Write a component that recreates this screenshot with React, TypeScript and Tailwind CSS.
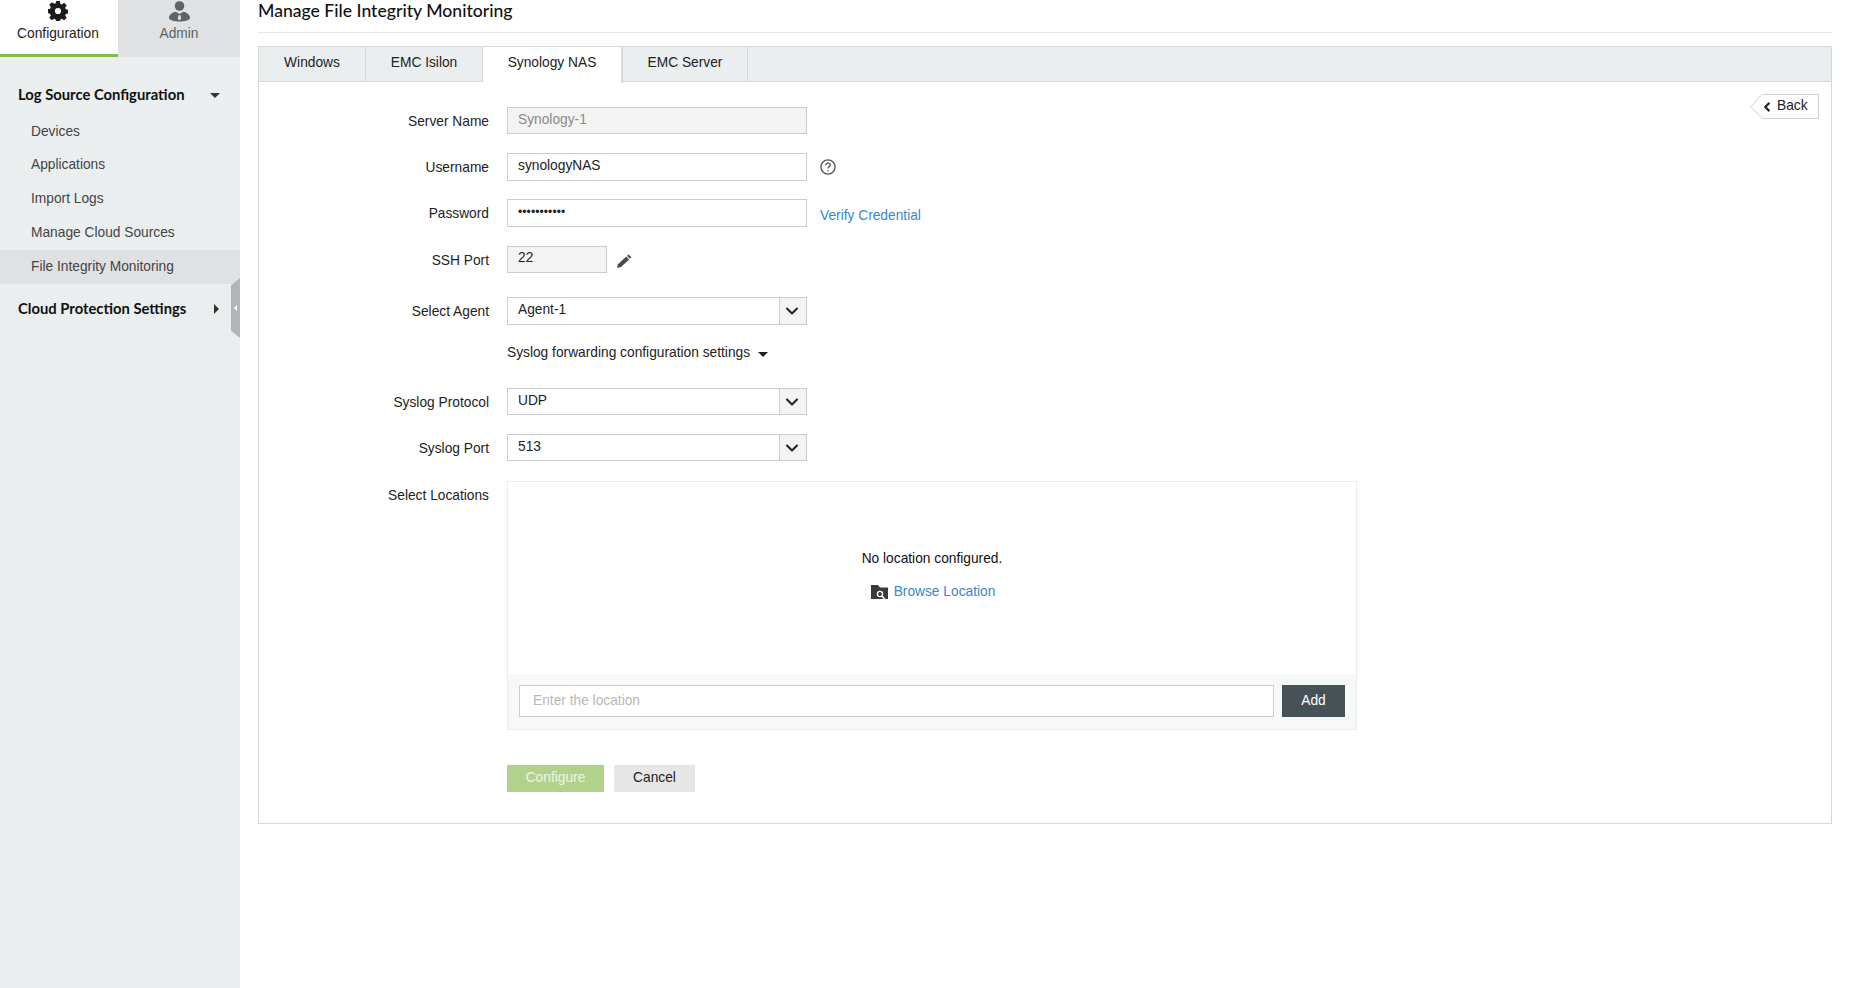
import { ChevronDown, ChevronLeft } from "lucide-react";

const menuItems = ["Devices", "Applications", "Import Logs", "Manage Cloud Sources", "File Integrity Monitoring"];
const tabs = [
  { label: "Windows", width: "w-[107px]" },
  { label: "EMC Isilon", width: "w-[117px]" },
  { label: "Synology NAS", width: "w-[140px]", active: true },
  { label: "EMC Server", width: "w-[125px]" },
];

function GearIcon() {
  return (
    <svg viewBox="0 0 24 24" className="w-[20px] h-[20px] mt-[1px]" fill="#1c1c1c">
      <path
        fillRule="evenodd"
        d="M9.800 0h4.400l.6 3.300 1.800.8 2.800-1.900 3.100 3.100-1.900 2.800.8 1.800 3.300.6v4.400l-3.300.6-.8 1.800 1.900 2.800-3.100 3.100-2.800-1.900-1.800.8-.6 3.300H9.800l-.6-3.300-1.800-.8-2.800 1.900-3.100-3.100 1.900-2.800-.8-1.800L-.7 14.200V9.800l3.300-.6.8-1.800-1.900-2.800 3.100-3.100 2.800 1.900 1.800-.8zM12 8.300a3.700 3.700 0 1 0 0 7.400 3.700 3.700 0 0 0 0-7.400z"
      />
    </svg>
  );
}

function AdminIcon() {
  return (
    <svg viewBox="0 0 21 21" className="w-[21px] h-[21px] mt-[1px]" fill="#5c6468">
      <circle cx="10.500" cy="5" r="4.800" />
      <path d="M0 17c0-3.500 3-5.500 6.800-6.300L10.500 13l3.700-2.300C18 11.500 21 13.500 21 17c0 2-5 3.500-10.500 3.500S0 19 0 17z" />
      <path d="M9.500 14.200h2l.6 3.800-1.600 1.300L8.900 18z" fill="#e0e1e2" />
    </svg>
  );
}

function FolderSearchIcon() {
  return (
    <svg viewBox="0 0 17 15" className="w-[17px] h-[15px]">
      <path d="M0 0h7l2 2.500h8V14H0z" fill="#3a3a3c" />
      <circle cx="9" cy="9" r="2.600" fill="none" stroke="#fff" strokeWidth="1.300" />
      <path d="M11 11l3 3.500" stroke="#fff" strokeWidth="1.500" />
    </svg>
  );
}

function Field({ label, className, children }: { label: string; className: string; children: React.ReactNode }) {
  return (
    <div className={`flex items-center ${className}`}>
      <div className="w-[230px] text-right pt-[3px]">{label}</div>
      <div className="ml-[18px] flex items-center">{children}</div>
    </div>
  );
}

function TextBox({ value, className }: { value: string; className: string }) {
  return <div className={`border border-[#cccccc] pl-[10px] flex items-center ${className}`}>{value}</div>;
}

function SelectBox({ value, height }: { value: string; height: string }) {
  return (
    <div className={`w-[300px] border border-[#cccccc] flex ${height}`}>
      <div className="flex-1 pl-[10px] pb-[1px] flex items-center">{value}</div>
      <div className="w-[27px] bg-[#f3f3f3] border-l border-[#cccccc] pr-[2px] flex items-center justify-center">
        <ChevronDown size={20} strokeWidth={2.500} color="#222" />
      </div>
    </div>
  );
}

export default function App() {
  return (
    <div className="flex min-h-screen bg-white text-[13.75px] text-[#222222] font-['Liberation_Sans',sans-serif]">
      {/* Sidebar */}
      <aside className="relative w-[240px] shrink-0 bg-[#eaeeef]">
        <div className="flex h-[57px]">
          <div className="w-[118px] bg-white border-b-[3px] border-[#84b84c] pr-[2px] flex flex-col items-center">
            <GearIcon />
            <span className="mt-[3px]">Configuration</span>
          </div>
          <div className="flex-1 bg-[#e0e1e2] text-[#5c6468] flex flex-col items-center">
            <AdminIcon />
            <span className="mt-[2px]">Admin</span>
          </div>
        </div>

        <div className="mt-[27px] pl-[18px] pr-[20px] h-[20px] flex items-center justify-between font-['Lato',sans-serif] font-bold text-[14.800px] text-[#111]">
          <span>Log Source Configuration</span>
          <span className="mt-[2px] w-0 h-0 border-x-[5px] border-t-[5px] border-x-transparent border-t-[#333]" />
        </div>
        <ul className="mt-[11px]">
          {menuItems.map((item) => (
            <li
              key={item}
              className={`h-[33.750px] pl-[31px] flex items-center text-[#444] ${item === "File Integrity Monitoring" ? "bg-[#e0e1e2]" : ""}`}
            >
              {item}
            </li>
          ))}
        </ul>
        <div className="mt-[14px] pl-[18px] pr-[21px] h-[20px] flex items-center justify-between font-['Lato',sans-serif] font-bold text-[14.800px] text-[#111]">
          <span>Cloud Protection Settings</span>
          <span className="mt-[3px] w-0 h-0 border-y-[5px] border-l-[5px] border-y-transparent border-l-[#333]" />
        </div>

        {/* collapse handle */}
        <div className="absolute right-0 top-[278px] w-[9px] h-[60px] bg-[#b0b6ba] [clip-path:polygon(100%_0,100%_100%,0_88%,0_12%)] flex items-center justify-center">
          <span className="w-0 h-0 border-y-[3px] border-r-[3px] border-y-transparent border-r-white" />
        </div>
      </aside>

      {/* Content */}
      <main className="flex-1 pl-[18px] pr-[19px]">
        <h1 className="h-[33px] border-b border-[#e4e6e7] font-['Lato',sans-serif] font-medium text-[17.600px] leading-[22px] text-[#111]">
          Manage File Integrity Monitoring
        </h1>

        <div className="relative mt-[13px] border border-[#d6d9da] h-[778px]">
          <div className="flex h-[35px] bg-[#eaeeef] border-b border-[#d6d9da]">
            {tabs.map((tab) => (
              <div
                key={tab.label}
                className={`${tab.width} flex items-center justify-center border-r border-[#d6d9da] ${tab.active ? "bg-white h-[36px] border-r-2 pb-[3px]" : "h-[34px] pb-[1px]"}`}
              >
                {tab.label}
              </div>
            ))}
          </div>

          {/* Back */}
          <div className="absolute right-[12px] top-[47px] h-[25px] w-[69px] flex items-center">
            <svg viewBox="0 0 69 25" className="absolute inset-0 w-[69px] h-[25px]" fill="none" stroke="#d0d0d0">
              <path d="M12 .5H68.500V24.500H12L.8 12.500z" fill="#fff" />
            </svg>
            <ChevronLeft size={14} strokeWidth={4} color="#222" className="relative ml-[10px]" />
            <span className="relative ml-[3px]">Back</span>
          </div>

          <div className="flex flex-col">
            <Field label="Server Name" className="mt-[25px]">
              <TextBox value="Synology-1" className="w-[300px] h-[27px] pb-[1px] bg-[#f3f3f3] text-[#8a8a8a]" />
            </Field>
            <Field label="Username" className="mt-[19px]">
              <TextBox value="synologyNAS" className="w-[300px] h-[28px] pb-[1px]" />
              <svg viewBox="0 0 18 18" className="ml-[13px] w-[16px] h-[16px]" fill="none" stroke="#555" strokeWidth="1.500">
                <circle cx="9" cy="9" r="8" />
                <path d="M6.500 7c0-1.500 1.200-2.300 2.500-2.300s2.500.9 2.500 2.200c0 1.800-2.500 1.900-2.500 3.800" />
                <path d="M9 12.300v1.500" />
              </svg>
            </Field>
            <Field label="Password" className="mt-[18px]">
              <TextBox value="•••••••••••" className="w-[300px] h-[28px] pb-[3px] text-[12px] tracking-[0.1px]" />
              <a className="ml-[13px] text-[#3a86c8] pt-[6px]">Verify Credential</a>
            </Field>
            <Field label="SSH Port" className="mt-[19px]">
              <TextBox value="22" className="w-[100px] h-[27px] pb-[2px] bg-[#f3f3f3]" />
              <svg viewBox="0 0 15 14" className="ml-[10px] mt-[2px] w-[15px] h-[14px]" fill="#4a4a4a">
                <path d="M0 14l1-3.800 8.200-7.700 2.900 2.900L4 13z" />
                <path d="M10 1.800L11.500.5l2.900 2.700-1.500 1.500z" />
              </svg>
            </Field>
            <Field label="Select Agent" className="mt-[24px]">
              <SelectBox value="Agent-1" height="h-[28px]" />
            </Field>
            <div className="ml-[248px] mt-[18px] h-[20px] flex items-center">
              <span>Syslog forwarding configuration settings</span>
              <span className="ml-[8px] mt-[3px] w-0 h-0 border-x-[5px] border-t-[5px] border-x-transparent border-t-[#222]" />
            </div>
            <Field label="Syslog Protocol" className="mt-[25px]">
              <SelectBox value="UDP" height="h-[27px]" />
            </Field>
            <Field label="Syslog Port" className="mt-[19px]">
              <SelectBox value="513" height="h-[27px]" />
            </Field>

            <div className="flex mt-[20px]">
              <div className="w-[230px] text-right pt-[5px]">Select Locations</div>
              <div className="ml-[18px] w-[850px] h-[249px] border border-[#ebeded] flex flex-col">
                <div className="flex-1 flex flex-col items-center pt-[67px]">
                  <div className="leading-[20px] text-[#111]">No location configured.</div>
                  <div className="mt-[13px] pl-[2px] flex items-center gap-[6px]">
                    <FolderSearchIcon />
                    <a className="text-[#3a86c8] leading-[20px]">Browse Location</a>
                  </div>
                </div>
                <div className="h-[55px] bg-[#f7f9f9] flex pt-[11px] pl-[11px] pr-[11px]">
                  <div className="w-[755px] h-[32px] bg-white border border-[#cccccc] pl-[13px] pt-[1px] flex items-center text-[#b8b8b8]">
                    Enter the location
                  </div>
                  <button className="ml-[8px] w-[63px] h-[32px] bg-[#475257] text-white">Add</button>
                </div>
              </div>
            </div>

            <div className="ml-[248px] mt-[35px] flex gap-[10px]">
              <button className="w-[97px] h-[27px] bg-[#b2d28b] text-[#eef5e6]">Configure</button>
              <button className="w-[81px] h-[27px] bg-[#e6e6e6] text-[#222]">Cancel</button>
            </div>
          </div>
        </div>
      </main>
    </div>
  );
}
